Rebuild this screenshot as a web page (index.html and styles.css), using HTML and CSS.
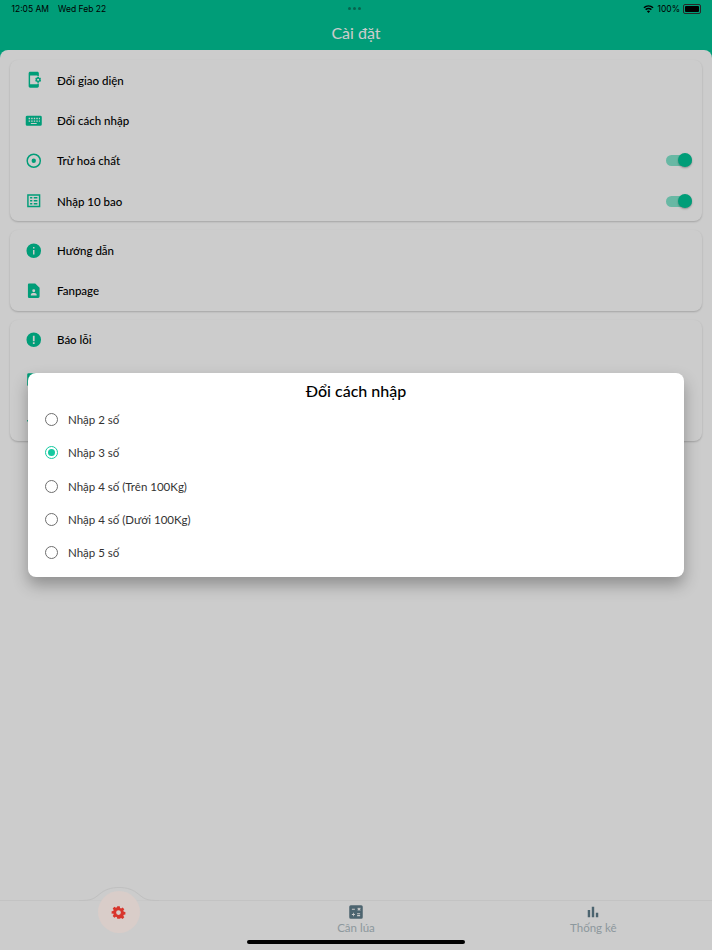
FILE: index.html
```html
<!DOCTYPE html>
<html lang="vi">
<head>
<meta charset="UTF-8">
<title>Cài đặt</title>
<link rel="stylesheet" href="styles.css">
</head>
<body>
<div class="app">
  <div class="status">
    <span class="time">12:05 AM</span>
    <span class="date">Wed Feb 22</span>
    <span class="dots"><i></i><i></i><i></i></span>
    <span class="status-right">
      <svg class="wifi" viewBox="0 0 12 9"><path d="M6 9 4.200 6.900a2.800 2.800 0 0 1 3.600 0zM3.300 5.900 2.200 4.600a5.900 5.900 0 0 1 7.600 0L8.700 5.900a4.200 4.200 0 0 0-5.400 0zM1.400 3.700.3 2.400a8.800 8.800 0 0 1 11.400 0l-1.100 1.300a7.100 7.100 0 0 0-9.200 0z"/></svg>
      <span>100%</span>
      <span class="battery"><b></b></span>
    </span>
  </div>
  <div class="title">Cài đặt</div>

  <div class="sheet">
    <div class="cards">
      <div class="card">
        <div class="row">
          <svg class="ico" viewBox="0 0 24 24"><path d="M21.810 12.740l-.82-.63v-.22l.8-.63c.16-.12.2-.34.1-.51l-.85-1.480c-.1-.17-.31-.24-.5-.17l-.95.38-.19-.11-.15-1.010c-.03-.21-.2-.36-.4-.36h-1.710c-.2 0-.37.15-.4.34l-.14 1.010-.19.11-.95-.38c-.19-.07-.4 0-.5.17l-.85 1.480c-.1.17-.06.39.1.51l.8.63v.23l-.8.63c-.16.12-.2.34-.1.51l.85 1.480c.1.17.31.24.5.17l.95-.37.2.11.15 1.010c.03.2.2.34.4.34h1.710c.2 0 .37-.15.4-.34l.15-1.010.19-.11.95.38c.19.07.4 0 .5-.17l.85-1.480c.1-.17.06-.39-.1-.51zM18 13.500a1.500 1.500 0 1 1 0-3 1.500 1.500 0 0 1 0 3zM17 18H7V6h10v1h2V3c0-1.100-.9-2-2-2H7c-1.100 0-2 .9-2 2v18c0 1.100.9 2 2 2h10c1.100 0 2-.9 2-2v-4h-2v1z"/></svg>
          <span class="label">Đổi giao diện</span>
        </div>
        <div class="row">
          <svg class="ico" viewBox="0 0 24 24"><path d="M3 5h18a2 2 0 0 1 2 2v10a2 2 0 0 1-2 2H3a2 2 0 0 1-2-2V7a2 2 0 0 1 2-2zm2 3v2h2V8zm3.500 0v2h2V8zM12 8v2h2V8zm3.500 0v2h2V8zM19 8v2h1.500V8zM5 11.500v2h2v-2zm3.500 0v2h2v-2zm3.500 0v2h2v-2zm3.500 0v2h2v-2zm3.500 0v2h1.500v-2zM8 15v1.500h8V15z" fill-rule="evenodd"/></svg>
          <span class="label">Đổi cách nhập</span>
        </div>
        <div class="row">
          <svg class="ico" viewBox="0 0 24 24"><path fill-rule="evenodd" d="M12 2a10 10 0 1 1 0 20 10 10 0 0 1 0-20zm0 2a8 8 0 1 0 0 16 8 8 0 0 0 0-16zm0 5a3 3 0 1 1 0 6 3 3 0 0 1 0-6z"/></svg>
          <span class="label">Trừ hoá chất</span>
          <span class="switch"><b></b></span>
        </div>
        <div class="row">
          <svg class="ico" viewBox="0 0 24 24"><path fill-rule="evenodd" d="M3 3h18v18H3zm2 2v14h14V5zm2 2h3v2H7zm5 0h5v2h-5zm-5 4h3v2H7zm5 0h5v2h-5zm-5 4h3v2H7zm5 0h5v2h-5z"/></svg>
          <span class="label">Nhập 10 bao</span>
          <span class="switch"><b></b></span>
        </div>
      </div>

      <div class="card">
        <div class="row">
          <svg class="ico" viewBox="0 0 24 24"><path fill-rule="evenodd" d="M12 2a10 10 0 1 1 0 20 10 10 0 0 1 0-20zm-1 9v6h2v-6zm0-4v2h2V7z"/></svg>
          <span class="label">Hướng dẫn</span>
        </div>
        <div class="row">
          <svg class="ico" viewBox="0 0 24 24"><path fill-rule="evenodd" d="M5 2h9l6 6v12a2 2 0 0 1-2 2H5a2 2 0 0 1-1-2V4a2 2 0 0 1 1-2zm7 8a2 2 0 1 0 0 4 2 2 0 0 0 0-4zm-4 8.500h8V17c0-1.300-2.700-2-4-2s-4 .7-4 2z"/></svg>
          <span class="label">Fanpage</span>
        </div>
      </div>

      <div class="card">
        <div class="row">
          <svg class="ico" viewBox="0 0 24 24"><path fill-rule="evenodd" d="M12 2a10 10 0 1 1 0 20 10 10 0 0 1 0-20zm-1.200 4.500v7.500h2.400V6.500zm0 9v2.400h2.400v-2.400z"/></svg>
          <span class="label">Báo lỗi</span>
        </div>
        <div class="row">
          <svg class="ico" viewBox="0 0 24 24"><rect x="3" y="3" width="18" height="18" rx="2"/></svg>
        </div>
        <div class="row">
          <svg class="ico" viewBox="0 0 24 24"><rect x="3" y="11" width="18" height="2"/></svg>
        </div>
      </div>
    </div>

    <div class="tabs">
      <svg class="bump" viewBox="0 0 80 14"><path d="M0 13.500c12 0 14-1 20-6C26 2.500 32 .5 40 .5s14 2 20 7c6 5 8 6 20 6"/></svg>
      <div class="tab">
        <span class="fab">
          <svg class="gear" viewBox="0 0 24 24"><path fill-rule="evenodd" d="M10 2h4l.5 2.700 1.700.7 2.300-1.600 2.800 2.800-1.600 2.300.7 1.700 2.600.4v4l-2.600.5-.7 1.700 1.600 2.300-2.800 2.800-2.300-1.600-1.700.7L14 22h-4l-.5-2.600-1.700-.7-2.300 1.600-2.800-2.800 1.600-2.300-.7-1.700L1 14v-4l2.600-.4.7-1.700-1.600-2.300 2.800-2.800 2.300 1.600 1.700-.7zm2 6.200a3.800 3.800 0 1 0 0 7.600 3.800 3.800 0 0 0 0-7.600z"/></svg>
        </span>
      </div>
      <div class="tab">
        <svg class="tab-ico" viewBox="0 0 24 24"><path fill-rule="evenodd" d="M5 3h14a2 2 0 0 1 2 2v14a2 2 0 0 1-2 2H5a2 2 0 0 1-2-2V5a2 2 0 0 1 2-2zm1.500 4.500V9h4V7.500zm7.300-.6 1.200 1.300-1.200 1.200 1 1 1.200-1.200 1.300 1.200 1-1-1.300-1.200 1.300-1.300-1-1-1.300 1.300-1.200-1.300zM8 13v1.500H6.500V16H8v1.500h1V16h1.500v-1.500H9V13zm5.500.5V15h4v-1.500zm0 2.500v1.500h4V16z"/></svg>
        <span class="tab-label">Cân lúa</span>
      </div>
      <div class="tab">
        <svg class="tab-ico" viewBox="0 0 24 24"><path d="M5 9.200h3.200V19H5zM10.400 5h3.200v14h-3.200zM15.800 13h3.200v6h-3.200z"/></svg>
        <span class="tab-label">Thống kê</span>
      </div>
    </div>
  </div>
</div>

<div class="overlay"></div>

<div class="dialog">
  <h2>Đổi cách nhập</h2>
  <div class="option"><span class="radio"></span>Nhập 2 số</div>
  <div class="option"><span class="radio on"></span>Nhập 3 số</div>
  <div class="option"><span class="radio"></span>Nhập 4 số (Trên 100Kg)</div>
  <div class="option"><span class="radio"></span>Nhập 4 số (Dưới 100Kg)</div>
  <div class="option"><span class="radio"></span>Nhập 5 số</div>
</div>

<div class="home-bar"></div>
</body>
</html>
```

FILE: styles.css
```css
html, body {
    margin: 0;
    height: 100%;
}
body {
    font-family: Lato, "Noto Sans", sans-serif;
    font-size: 11px;
    color: #000;
    overflow: hidden;
}
.app {
    height: 950px;
    display: flex;
    flex-direction: column;
    background: #00c597;
}

/* status bar */
.status {
    height: 17px;
    display: flex;
    align-items: center;
    padding: 0 11px 0 11.5px;
    font-family: Inter, sans-serif;
    font-size: 8.5px;
    position: relative;
}
.date {
    margin-left: 9px;
}
.dots {
    flex: 1;
    display: flex;
    justify-content: center;
    gap: 2px;
    margin-right: 40px;
}
.dots i {
    width: 3px;
    height: 3px;
    border-radius: 50%;
    background: #0a7d62;
}
.status-right {
    display: flex;
    align-items: center;
    gap: 3px;
}
.wifi {
    width: 11px;
    height: 8px;
}
.battery {
    width: 14px;
    height: 6px;
    padding: 1px;
    border: 1px solid #333;
    border-radius: 2px;
    display: flex;
}
.battery b {
    flex: 1;
    background: #000;
    border-radius: 1px;
}

.title {
    height: 33px;
    line-height: 31px;
    text-align: center;
    font-size: 16px;
    color: #fff;
}

/* white sheet under the header */
.sheet {
    flex: 1;
    display: flex;
    flex-direction: column;
    justify-content: space-between;
    background: #fff;
    border-radius: 8px 8px 0 0;
}
.cards {
    padding: 10px 10px 0;
    display: flex;
    flex-direction: column;
    gap: 9px;
}
.card {
    border-radius: 8px;
    box-shadow: 0 1px 2px rgba(0,0,0,.2);
}
.row {
    height: 40.3px;
    display: flex;
    align-items: center;
    padding: 0 10px 0 15px;
    gap: 14.5px;
}
.ico {
    width: 17.5px;
    height: 17.5px;
    fill: #00c597;
    flex: none;
}
.label {
    font-weight: 500;
    font-size: 11.5px;
    flex: 1;
}
.switch {
    width: 26px;
    height: 11px;
    border-radius: 6px;
    background: #83e7ce;
    position: relative;
}
.switch b {
    position: absolute;
    right: 0;
    top: -2px;
    width: 14px;
    height: 14px;
    border-radius: 50%;
    background: #00c597;
    box-shadow: 0 1px 2px rgba(0,0,0,.3);
}

/* bottom tabs */
.tabs {
    height: 49px;
    display: grid;
    grid-template-columns: repeat(3, 1fr);
    border-top: 1px solid #f4f4f4;
    position: relative;
}
.bump {
    position: absolute;
    left: 79px;
    top: -14px;
    width: 80px;
    height: 14px;
    fill: #fff;
    stroke: #f0f0f0;
}
.tab {
    display: flex;
    flex-direction: column;
    align-items: center;
    padding-top: 2px;
    position: relative;
}
/* painted above the dim layer, it keeps its pale tint there */
.fab {
    position: absolute;
    z-index: 1;
    top: -10px;
    width: 42px;
    height: 42px;
    border-radius: 50%;
    background: #d9cdc9;
    display: flex;
    align-items: center;
    justify-content: center;
}
.gear {
    width: 15px;
    height: 15px;
    fill: #d8352c;
}
.tab-ico {
    width: 18px;
    height: 18px;
    fill: #607d8b;
}
.tab-label {
    color: #b0bec5;
    font-size: 11.5px;
    line-height: 13px;
}

/* dim layer and the dialog on top of it */
.overlay {
    position: absolute;
    inset: 0;
    background: rgba(0,0,0,.2);
}
.dialog {
    position: absolute;
    left: 28px;
    top: 373px;
    width: 656px;
    height: 204px;
    background: #fff;
    border-radius: 8px;
    box-shadow: 0 8px 16px rgba(0,0,0,.3);
}
.dialog h2 {
    margin: 0;
    height: 30px;
    line-height: 36px;
    text-align: center;
    font-size: 16px;
    font-weight: 500;
}
.option {
    height: 33.3px;
    display: flex;
    align-items: center;
    padding-left: 17px;
    gap: 10px;
    font-size: 11.5px;
    color: #333;
}
.radio {
    width: 13px;
    height: 13px;
    box-sizing: border-box;
    border: 1.500px solid #6e6e6e;
    border-radius: 50%;
    display: flex;
    align-items: center;
    justify-content: center;
}
.radio.on {
    border-color: #14c9a0;
}
.radio.on::after {
    content: "";
    width: 7px;
    height: 7px;
    border-radius: 50%;
    background: #14c9a0;
}
.home-bar {
    position: absolute;
    left: 247px;
    top: 940px;
    width: 218px;
    height: 4px;
    border-radius: 2px;
    background: #000;
}
```
